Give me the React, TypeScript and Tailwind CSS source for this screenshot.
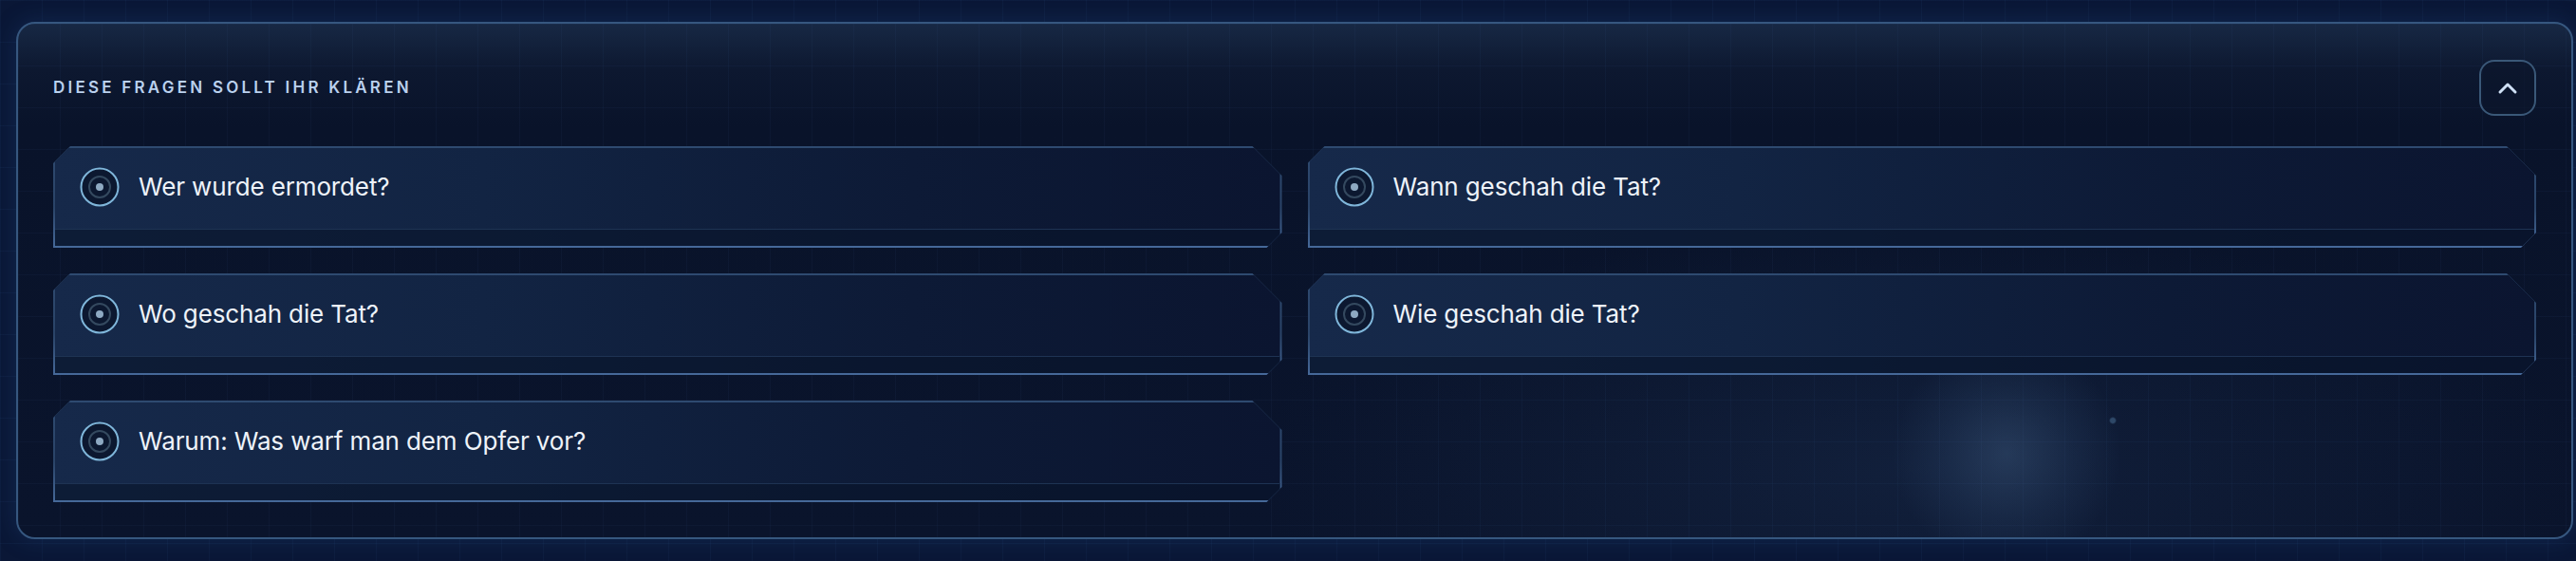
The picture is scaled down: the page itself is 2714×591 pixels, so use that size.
import React from "react";

const questions = [
  "Wer wurde ermordet?",
  "Wann geschah die Tat?",
  "Wo geschah die Tat?",
  "Wie geschah die Tat?",
  "Warum: Was warf man dem Opfer vor?",
];

function TargetIcon() {
  return (
    <svg width="42" height="42" viewBox="0 0 42 42" className="shrink-0">
      <circle cx="21" cy="21" r="19.5" fill="#0c1830" stroke="#7fb6da" strokeWidth="2" />
      <circle cx="21" cy="21" r="11" fill="none" stroke="#34495f" strokeWidth="2" />
      <circle cx="21" cy="21" r="4" fill="#8ea9c2" />
    </svg>
  );
}

function QuestionCard({ text }: { text: string }) {
  return (
    <div className="h-[107px] p-[2px] bg-[linear-gradient(180deg,#2e4a70_0%,#2a4468_60%,#46699a_100%)] [clip-path:polygon(18px_0,calc(100%_-_31px)_0,100%_31px,100%_calc(100%_-_16px),calc(100%_-_16px)_100%,0_100%,0_18px)]">
      <div className="h-full flex flex-col bg-[linear-gradient(90deg,#16294a_0%,#122443_35%,#0d1a36_70%,#0b1530_100%)] [clip-path:polygon(14px_0,calc(100%_-_27px)_0,100%_27px,100%_calc(100%_-_12px),calc(100%_-_12px)_100%,0_100%,0_14px)]">
        <div className="h-[85px] flex items-start gap-[20px] pl-[26px] pt-[20px]">
          <TargetIcon />
          <span className="text-[26px] leading-[42px] text-[#eef3fa] tracking-[-0.005em]">
            {text}
          </span>
        </div>
        <div className="flex-1 border-t border-[#1e3353] bg-[#09142a]/60" />
      </div>
    </div>
  );
}

export default function App() {
  return (
    <div className="w-full h-[591px] overflow-hidden bg-[#0a1736] bg-[linear-gradient(rgba(90,140,220,0.05)_1px,transparent_1px),linear-gradient(90deg,rgba(90,140,220,0.05)_1px,transparent_1px)] bg-[size:44px_44px] pl-[17px] pr-[3px] pt-[23px] font-[Inter,'Noto_Sans',sans-serif]">
      <div className="h-[545px] rounded-[20px] border-2 border-[#36577f] overflow-hidden shadow-[0_0_24px_rgba(40,90,160,0.25)] bg-[#09132a] bg-[radial-gradient(circle_4px_at_893px_332px,#2c4466_0%,#2c4466_60%,transparent_100%),radial-gradient(circle_4px_at_2207px_418px,#2e4868_0%,#2e4868_60%,transparent_100%),linear-gradient(rgba(90,140,220,0.045)_1px,transparent_1px),linear-gradient(90deg,rgba(90,140,220,0.045)_1px,transparent_1px),radial-gradient(circle_120px_at_2095px_453px,rgba(66,96,134,0.42)_0%,rgba(56,86,124,0.2)_55%,rgba(56,86,124,0)_100%),radial-gradient(ellipse_700px_260px_at_2000px_470px,rgba(40,66,105,0.25)_0%,rgba(40,66,105,0)_100%),linear-gradient(180deg,#172844_0%,#0d1830_9%,#09132a_20%,#0a142c_100%)] [background-size:100%_100%,100%_100%,44px_44px,44px_44px,100%_100%,100%_100%,100%_100%]">
        <div className="px-[37px] pt-[38px] pb-[37px]">
          <div className="flex items-center justify-between h-[59px]">
            <h2 className="text-[17px] font-semibold tracking-[0.19em] text-[#bad1ee] uppercase">
              Diese Fragen sollt ihr klären
            </h2>
            <button className="w-[60px] h-[59px] rounded-[16px] border-2 border-[#3a5878] bg-[#0b152c]/60 flex items-center justify-center">
              <svg width="22" height="14" viewBox="0 0 22 14">
                <polyline points="3,11 11,3 19,11" fill="none" stroke="#cfe0f5" strokeWidth="3" strokeLinecap="round" strokeLinejoin="round" />
              </svg>
            </button>
          </div>
          <div className="mt-[32px] grid grid-cols-2 gap-x-[27px] gap-y-[27px]">
            {questions.map((q) => (
              <QuestionCard key={q} text={q} />
            ))}
          </div>
        </div>
      </div>
    </div>
  );
}
